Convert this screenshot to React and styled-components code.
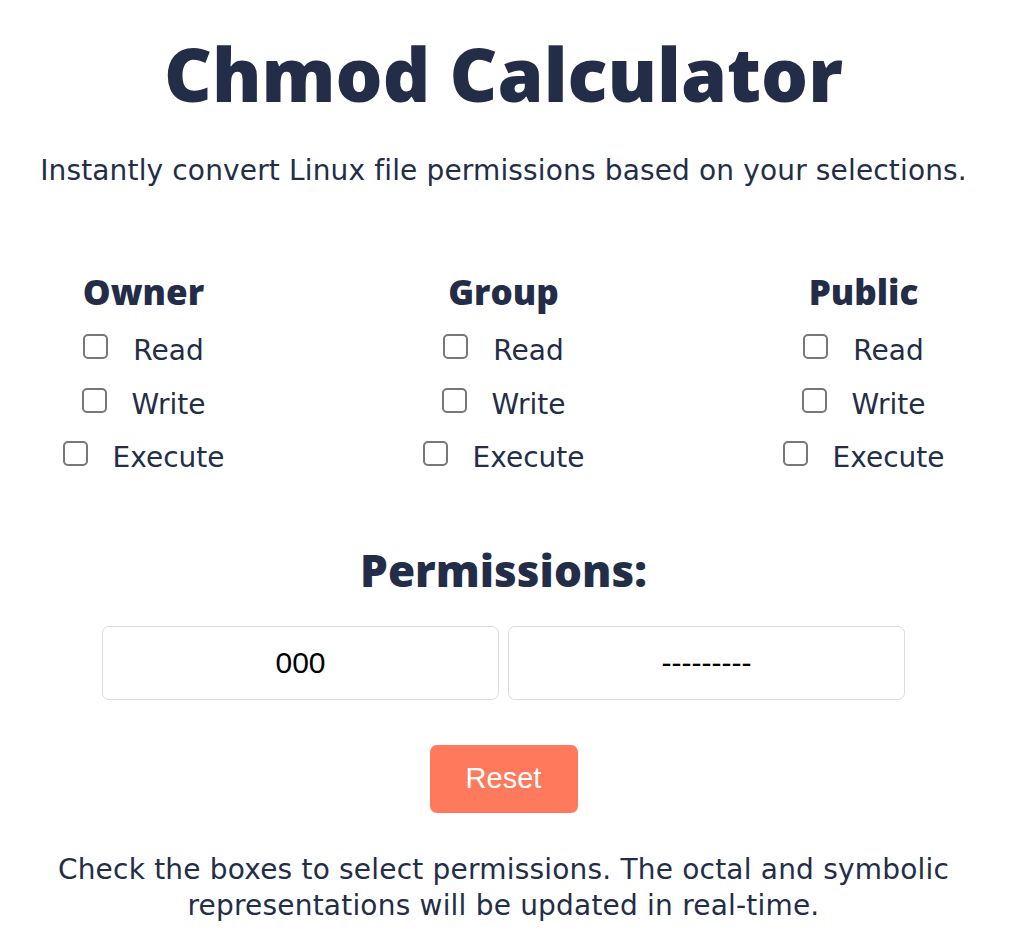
import React, { useState } from "react";
import styled, { createGlobalStyle } from "styled-components";

const Global = createGlobalStyle`
  html, body { margin: 0; padding: 0; background: #ffffff; }
  body { font-family: "DejaVu Sans", "Open Sans", sans-serif; color: #232d47; }
`;

const Page = styled.main`
  display: flex;
  flex-direction: column;
  align-items: center;
  text-align: center;
  padding: 30px 15px 40px 0;
`;

const Title = styled.h1`
  margin: 0;
  font-family: "Open Sans", "DejaVu Sans", sans-serif;
  font-size: 74px;
  line-height: 88px;
  font-weight: 800;
`;

const Subtitle = styled.p`
  margin: 36px 0 0;
  font-size: 28px;
  line-height: 34px;
  letter-spacing: 0.15px;
  font-weight: 400;
`;

const Groups = styled.section`
  display: grid;
  grid-template-columns: repeat(3, 165px);
  column-gap: 195px;
  margin-top: 84px;
`;

const Group = styled.div`
  display: flex;
  flex-direction: column;
  align-items: center;
`;

const GroupTitle = styled.h3`
  margin: 0 0 12px;
  font-family: "Open Sans", "DejaVu Sans", sans-serif;
  font-size: 35px;
  line-height: 40px;
  font-weight: 800;
`;

const Option = styled.label`
  display: flex;
  align-items: center;
  gap: 25px;
  height: 53.5px;
  font-size: 28px;
  white-space: nowrap;
  cursor: pointer;
`;

const Box = styled.input`
  appearance: none;
  margin: 0;
  width: 25px;
  height: 25px;
  border: 2px solid #777777;
  border-radius: 5px;
  background: #ffffff;
  cursor: pointer;
  position: relative;
  top: -4px;
  &:checked {
    background: #2f6fde;
    border-color: #2f6fde;
  }
`;

const Subheading = styled.h2`
  margin: 60px 0 0;
  font-family: "Open Sans", "DejaVu Sans", sans-serif;
  font-size: 44px;
  line-height: 50px;
  font-weight: 800;
`;

const Outputs = styled.div`
  display: flex;
  gap: 9px;
  margin-top: 31px;
`;

const Output = styled.input`
  box-sizing: border-box;
  width: 397px;
  height: 74px;
  border: 1px solid #dcdcdc;
  border-radius: 7px;
  background: #ffffff;
  text-align: center;
  font-family: "Liberation Sans", Arial, sans-serif;
  font-size: 30px;
  color: #000000;
  outline: none;
`;

const ResetButton = styled.button`
  margin-top: 45px;
  width: 148px;
  height: 68px;
  border: none;
  border-radius: 7px;
  background: #ff7a5c;
  color: #ffffff;
  font-family: "Liberation Sans", Arial, sans-serif;
  font-size: 29px;
  cursor: pointer;
`;

const Note = styled.p`
  margin: 39px 0 0;
  font-size: 28px;
  line-height: 36px;
  letter-spacing: 0.2px;
`;

const GROUPS = ["Owner", "Group", "Public"];
const PERMS = [
  { key: "r", label: "Read", value: 4 },
  { key: "w", label: "Write", value: 2 },
  { key: "x", label: "Execute", value: 1 },
];

export default function App() {
  const empty = () => GROUPS.map(() => ({ r: false, w: false, x: false }));
  const [state, setState] = useState(empty);

  const toggle = (gi, key) =>
    setState((s) => s.map((g, i) => (i === gi ? { ...g, [key]: !g[key] } : g)));

  const octal = state
    .map((g) => PERMS.reduce((n, p) => n + (g[p.key] ? p.value : 0), 0))
    .join("");
  const symbolic = state
    .map((g) => PERMS.map((p) => (g[p.key] ? p.key : "-")).join(""))
    .join("");

  return (
    <>
      <Global />
      <Page>
        <Title>Chmod Calculator</Title>
        <Subtitle>Instantly convert Linux file permissions based on your selections.</Subtitle>
        <Groups>
          {GROUPS.map((name, gi) => (
            <Group key={name}>
              <GroupTitle>{name}</GroupTitle>
              {PERMS.map((p) => (
                <Option key={p.key}>
                  <Box
                    type="checkbox"
                    checked={state[gi][p.key]}
                    onChange={() => toggle(gi, p.key)}
                  />
                  {p.label}
                </Option>
              ))}
            </Group>
          ))}
        </Groups>
        <Subheading>Permissions:</Subheading>
        <Outputs>
          <Output readOnly value={octal} />
          <Output readOnly value={symbolic} />
        </Outputs>
        <ResetButton onClick={() => setState(empty())}>Reset</ResetButton>
        <Note>
          Check the boxes to select permissions. The octal and symbolic
          <br />
          representations will be updated in real-time.
        </Note>
      </Page>
    </>
  );
}
